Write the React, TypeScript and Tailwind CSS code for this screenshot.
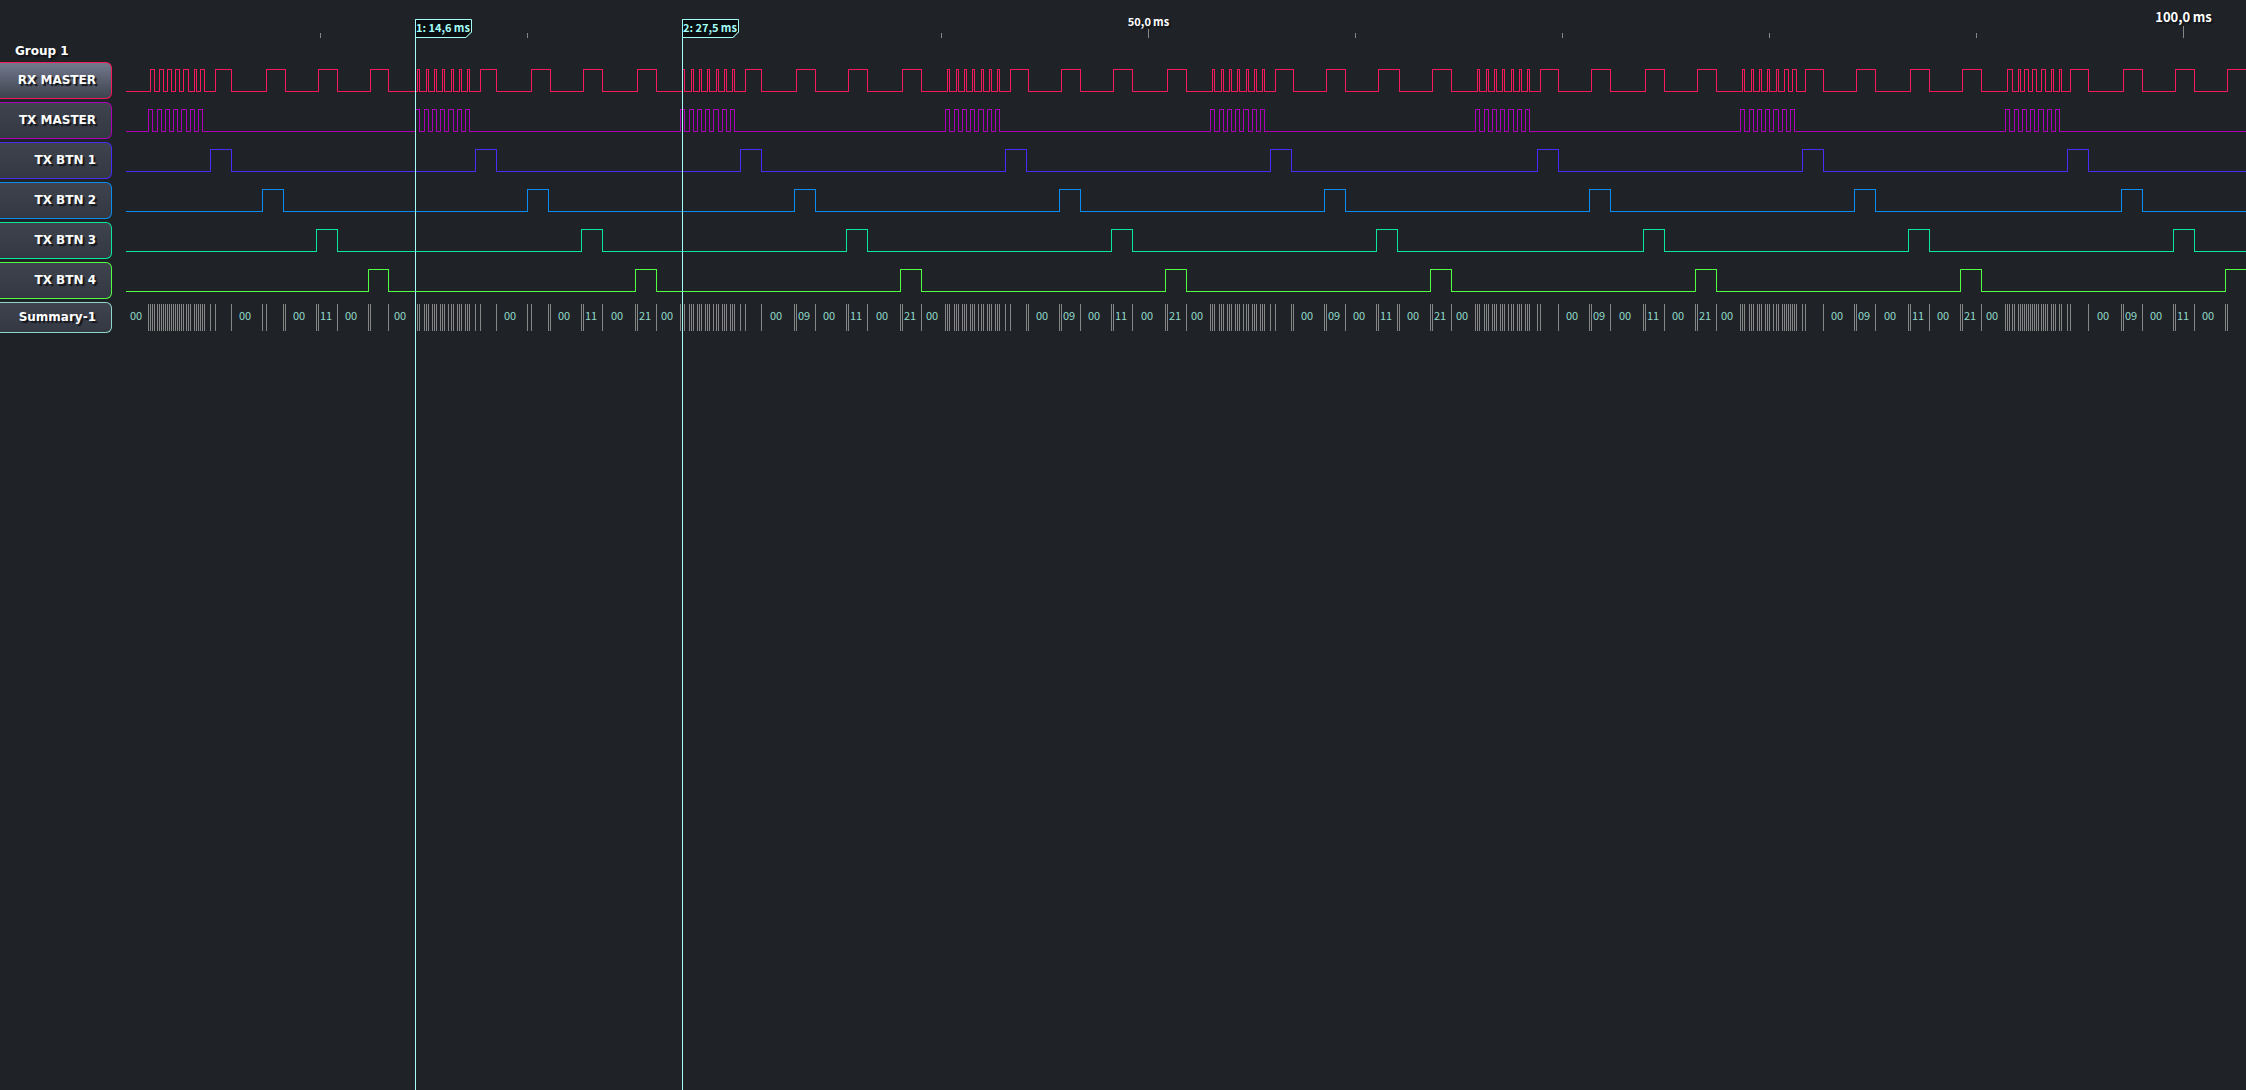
import React from "react";

type Channel = {
  name: string;
  color: string;
  border: string;
  edges: number[];
  selected?: boolean;
};

const ORIGIN = 126;

const BURSTS = [148, 415, 680, 945, 1210, 1475, 1740, 2005];
const TX_PATTERN = [0, 4, 9, 13, 17, 21, 25, 29, 33, 38, 42, 46, 50, 54];
const RX_PATTERN = [2, 4, 11, 13, 19, 21, 27, 29, 36, 38, 44, 46, 52, 54];

const shift = (pattern: number[], start: number) => pattern.map((p) => p + start);

const RX_EDGES = [
  150, 154, 159, 163, 167, 171, 175, 179, 183, 188, 194, 196, 200, 204,
  215, 231, 266, 285, 318, 337, 370, 388,
  ...shift(RX_PATTERN, 415), 480, 496, 531, 550, 583, 602, 637, 656,
  ...shift(RX_PATTERN, 680), 745, 761, 796, 815, 848, 867, 902, 921,
  ...shift(RX_PATTERN, 945), 1010, 1028, 1061, 1080, 1113, 1132, 1167, 1186,
  ...shift(RX_PATTERN, 1210), 1275, 1293, 1326, 1345, 1378, 1399, 1432, 1451,
  ...shift(RX_PATTERN, 1475), 1540, 1558, 1591, 1610, 1645, 1664, 1697, 1716,
  1742, 1744, 1751, 1753, 1759, 1761, 1767, 1769, 1776, 1778, 1784, 1788, 1792, 1796,
  1805, 1823, 1856, 1875, 1910, 1929, 1962, 1981,
  2007, 2012, 2018, 2020, 2024, 2028, 2032, 2036, 2041, 2045, 2051, 2053, 2059, 2061,
  2070, 2088, 2123, 2142, 2175, 2194, 2227,
];

const CHANNELS: Channel[] = [
  { name: "RX MASTER", color: "#f5185a", border: "border-[#f5185a]", edges: RX_EDGES, selected: true },
  {
    name: "TX MASTER",
    color: "#ab00b5",
    border: "border-[#ab00b5]",
    edges: BURSTS.flatMap((b) => shift(TX_PATTERN, b)),
  },
  {
    name: "TX BTN 1",
    color: "#4a2cf5",
    border: "border-[#4a2cf5]",
    edges: [210, 231, 475, 496, 740, 761, 1005, 1026, 1270, 1291, 1537, 1558, 1802, 1823, 2067, 2088],
  },
  {
    name: "TX BTN 2",
    color: "#0b8cf0",
    border: "border-[#0b8cf0]",
    edges: [262, 283, 527, 548, 794, 815, 1059, 1080, 1324, 1345, 1589, 1610, 1854, 1875, 2121, 2142],
  },
  {
    name: "TX BTN 3",
    color: "#0ce79c",
    border: "border-[#0ce79c]",
    edges: [316, 337, 581, 602, 846, 867, 1111, 1132, 1376, 1397, 1643, 1664, 1908, 1929, 2173, 2194],
  },
  {
    name: "TX BTN 4",
    color: "#52ff42",
    border: "border-[#52ff42]",
    edges: [368, 388, 635, 656, 900, 921, 1165, 1186, 1430, 1451, 1695, 1716, 1960, 1981, 2225],
  },
];

const ALL_EDGES = Array.from(new Set(CHANNELS.flatMap((c) => c.edges))).sort((a, b) => a - b);

function busValue(x: number) {
  return CHANNELS.reduce((sum, channel, bit) => {
    const toggles = channel.edges.filter((e) => e <= x).length;
    return toggles % 2 === 1 ? sum + (1 << bit) : sum;
  }, 0);
}

const BUS_LABELS = [ORIGIN, ...ALL_EDGES].slice(0, -1).flatMap((start, i) => {
  const end = ALL_EDGES[i];
  if (end - start < 19) return [];
  const text = busValue(start).toString(16).padStart(2, "0");
  return [{ x: Math.floor((start + end) / 2) - 1 - ORIGIN, text }];
});

const TICKS = [
  { x: 320 }, { x: 527 }, { x: 734 }, { x: 941 },
  { x: 1148, label: "50,0", text: "text-[11px] leading-4", tick: "h-[9px]" },
  { x: 1355 }, { x: 1562 }, { x: 1769 }, { x: 1976 },
  { x: 2183, label: "100,0", text: "text-[13px] leading-[18px]", tick: "h-3" },
];

const CURSORS = [
  { x: 415, label: "1: 14,6" },
  { x: 682, label: "2: 27,5" },
];

function wavePath(edges: number[]) {
  let high = false;
  let d = "M0 29.5";
  for (const e of edges) {
    high = !high;
    d += ` H${e - ORIGIN + 0.5} V${high ? 7.5 : 29.5}`;
  }
  return `${d} H4000`;
}

function ChannelRow({ channel }: { channel: Channel }) {
  return (
    <div className="flex h-[37px]">
      <button
        type="button"
        className={`w-28 shrink-0 rounded-r-md border border-l-0 pr-[15px] pb-0.5 text-right text-xs font-bold text-white [text-shadow:2px_2px_1px_#12151a] ${channel.border} ${
          channel.selected
            ? "bg-linear-to-b from-[#737a8e] to-[#3f434f]"
            : "bg-linear-to-b from-[#3f434e] to-[#343842]"
        }`}
      >
        {channel.name}
      </button>
      <svg className="ml-3.5 h-full min-w-0 flex-1" role="img" aria-label={`${channel.name} signal`}>
        <path d={wavePath(channel.edges)} fill="none" stroke={channel.color} shapeRendering="crispEdges" />
      </svg>
    </div>
  );
}

function SummaryRow() {
  return (
    <div className="flex h-[31px]">
      <button
        type="button"
        className="w-28 shrink-0 rounded-r-md border border-l-0 border-[#8fd6c9] bg-linear-to-b from-[#3f434e] to-[#343842] pr-[15px] pb-0.5 text-right text-xs font-bold text-white [text-shadow:2px_2px_1px_#12151a]"
      >
        Summary-1
      </button>
      <svg
        className="ml-3.5 h-full min-w-0 flex-1 font-['Noto_Sans_CJK_JP',sans-serif] text-[11px]"
        role="img"
        aria-label="Bus values"
      >
        {ALL_EDGES.map((e) => (
          <rect key={e} x={e - ORIGIN} y={2} width={1} height={27} fill="#868686" />
        ))}
        {BUS_LABELS.map((l) => (
          <text key={l.x} x={l.x} y={18} textAnchor="middle" fill="#8fd9c8">
            {l.text}
          </text>
        ))}
      </svg>
    </div>
  );
}

function Ruler() {
  return (
    <div className="relative h-[38px] overflow-hidden font-['Noto_Sans_CJK_JP',sans-serif] font-bold text-white">
      {TICKS.map((t) => (
        <div
          key={t.x}
          className="absolute bottom-0 flex w-px flex-col items-center"
          style={{ left: t.x }}
        >
          {t.label && (
            <span className={`whitespace-nowrap [text-shadow:2px_2px_1px_#12151a] ${t.text}`}>
              {t.label}&#8201;ms
            </span>
          )}
          <span className={`w-px bg-[#868686] ${t.tick ?? "h-[5px]"}`} />
        </div>
      ))}
    </div>
  );
}

function Cursor({ x, label }: { x: number; label: string }) {
  return (
    <div className="absolute top-[19px] bottom-0 border-l border-[#a5fdf8]" style={{ left: x }}>
      <div className="relative -ml-px h-[19px] w-[57px]">
        <svg className="absolute inset-0 h-full w-full" aria-hidden="true">
          <path d="M0.5 0.5 H56.5 V13 L51 18.5 H0.5 Z" fill="#0a0e10" stroke="#a5fdf8" />
          <path d="M56.5 13 V18.5 H51 Z" fill="#1f2227" />
          <path d="M56.5 13 L51 18.5" stroke="#a5fdf8" />
        </svg>
        <span className="relative block whitespace-nowrap pl-px font-['Noto_Sans_CJK_JP',sans-serif] text-[11px] leading-[17px] font-bold text-[#a5fdf8]">
          {label}&#8201;ms
        </span>
      </div>
    </div>
  );
}

export default function App() {
  return (
    <main className="relative min-h-screen overflow-hidden bg-[#1f2227] font-['DejaVu_Sans',sans-serif]">
      <Ruler />
      <h1 className="h-6 pl-[15px] text-xs leading-[26px] font-bold text-white [text-shadow:2px_2px_1px_#12151a]">
        Group 1
      </h1>
      <section className="flex flex-col gap-[3px]">
        {CHANNELS.map((c) => (
          <ChannelRow key={c.name} channel={c} />
        ))}
        <SummaryRow />
      </section>
      {CURSORS.map((c) => (
        <Cursor key={c.x} {...c} />
      ))}
    </main>
  );
}
